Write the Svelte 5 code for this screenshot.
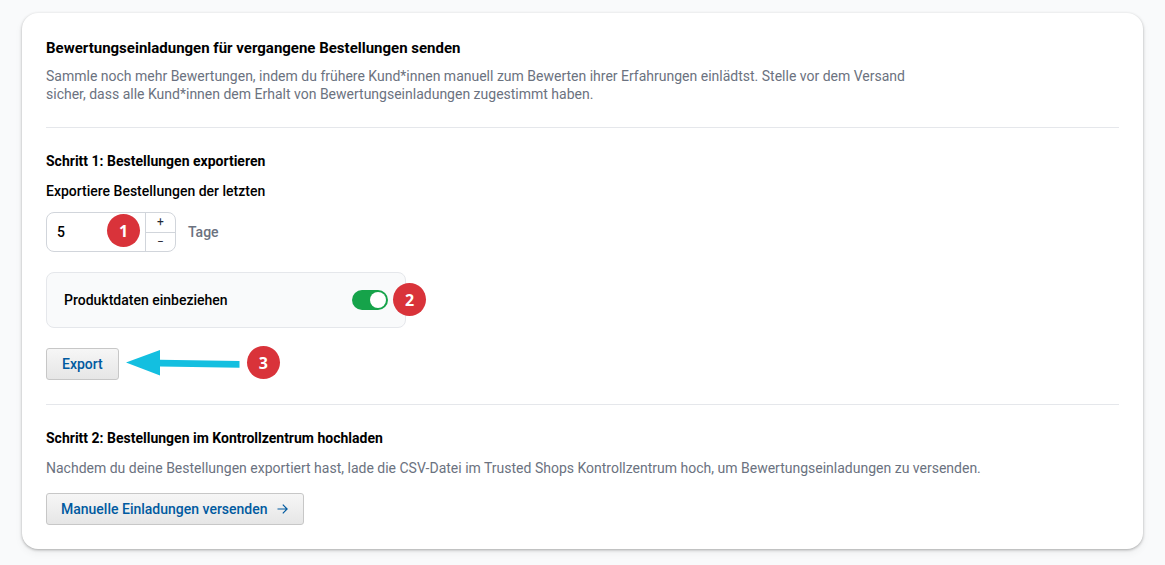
<script>
  let days = 5;
  let includeProducts = true;

  function increase() {
    days += 1;
  }

  function decrease() {
    if (days > 1) days -= 1;
  }
</script>

<main class="page">
  <div class="card">
    <section>
      <h1>Bewertungseinladungen für vergangene Bestellungen senden</h1>
      <p class="intro">
        Sammle noch mehr Bewertungen, indem du frühere Kund*innen manuell zum Bewerten ihrer
        Erfahrungen einlädtst. Stelle vor dem Versand sicher, dass alle Kund*innen dem Erhalt von
        Bewertungseinladungen zugestimmt haben.
      </p>
    </section>

    <section class="step">
      <h2>Schritt 1: Bestellungen exportieren</h2>
      <label class="field-label" for="days">Exportiere Bestellungen der letzten</label>

      <div class="days-row">
        <div class="stepper">
          <input id="days" type="text" inputmode="numeric" bind:value={days} />
          <div class="stepper-buttons">
            <button type="button" aria-label="Mehr Tage" on:click={increase}>+</button>
            <button type="button" aria-label="Weniger Tage" on:click={decrease}>−</button>
          </div>
          <span class="marker marker-days">1</span>
        </div>
        <span class="unit">Tage</span>
      </div>

      <div class="option">
        <label for="products">Produktdaten einbeziehen</label>
        <input id="products" class="switch" type="checkbox" bind:checked={includeProducts} />
        <span class="marker marker-option">2</span>
      </div>

      <div class="export">
        <button type="button" class="btn btn-export">Export</button>
        <div class="callout">
          <svg width="114" height="26" viewBox="0 0 114 26" aria-hidden="true">
            <path d="M0 12.5 34 0V9.7L113.5 11v6.7L34 16.5V25.500Z" fill="#13bfe0" />
          </svg>
          <span class="marker">3</span>
        </div>
      </div>
    </section>

    <section class="step">
      <h2>Schritt 2: Bestellungen im Kontrollzentrum hochladen</h2>
      <p class="hint">
        Nachdem du deine Bestellungen exportiert hast, lade die CSV-Datei im Trusted Shops
        Kontrollzentrum hoch, um Bewertungseinladungen zu versenden.
      </p>
      <button type="button" class="btn">
        Manuelle Einladungen versenden
        <svg width="12" height="12" viewBox="0 0 12 12" aria-hidden="true">
          <path d="M.5 6h9.5M5.8 1.700 10.100 6 5.800 10.300" fill="none" stroke="currentColor" stroke-width="1.200" />
        </svg>
      </button>
    </section>
  </div>
</main>

<style>
  :global(body) {
    background: #f9fafb;
  }

  .page {
    padding: 13px 22px 16px;
    font-family: Roboto, 'Liberation Sans', sans-serif;
    font-size: 14px;
    line-height: 18px;
    color: #000;
  }

  .card {
    padding: 24px;
    background: #fff;
    border-radius: 16px;
    box-shadow:
      0 1px 3px rgba(0, 0, 0, 0.3),
      0 4px 8px rgba(0, 0, 0, 0.05);
  }

  .step {
    margin-top: 24px;
    padding-top: 24px;
    border-top: 1px solid #e5e7eb;
  }

  h1,
  h2,
  p {
    margin: 0;
  }

  h1 {
    font-size: 15px;
    line-height: 22px;
    font-weight: 700;
  }

  h2 {
    font-size: 14px;
    line-height: 18px;
    font-weight: 700;
  }

  p {
    color: #6b7280;
  }

  .intro {
    max-width: 896px;
    margin-top: 8px;
  }

  .hint {
    margin: 12px 0 16px;
  }

  input,
  button {
    font: inherit;
    color: inherit;
    margin: 0;
  }

  .field-label {
    display: block;
    margin: 12px 0;
    font-weight: 500;
  }

  .days-row {
    display: flex;
    align-items: center;
    gap: 12px;
  }

  .stepper {
    position: relative;
    display: flex;
    box-sizing: border-box;
    width: 130px;
    height: 40px;
    border: 1px solid #d1d5db;
    border-radius: 8px;
  }

  .stepper input {
    flex: 1;
    min-width: 0;
    padding: 0 10px;
    border: none;
    border-radius: 8px;
    background: none;
    font-weight: 500;
  }

  .stepper-buttons {
    display: flex;
    flex-direction: column;
    width: 29px;
    border-left: 1px solid #d1d5db;
  }

  .stepper-buttons button {
    flex: 1;
    padding: 0;
    border: none;
    background: none;
    color: #1f2937;
    font-size: 12px;
    line-height: 18px;
    cursor: pointer;
  }

  .stepper-buttons button + button {
    border-top: 1px solid #d1d5db;
  }

  .unit {
    color: #6b7280;
    font-weight: 500;
  }

  .option {
    position: relative;
    display: flex;
    align-items: center;
    justify-content: space-between;
    box-sizing: border-box;
    max-width: 360px;
    margin: 20px 0;
    padding: 18px 17px;
    background: #f9fafb;
    border: 1px solid #e5e7eb;
    border-radius: 8px;
    font-weight: 500;
  }

  .switch {
    appearance: none;
    display: flex;
    box-sizing: border-box;
    width: 36px;
    height: 20px;
    margin: -1px 0;
    padding: 2px;
    border-radius: 10px;
    background: #d1d5db;
    cursor: pointer;
  }

  .switch::before {
    content: '';
    width: 16px;
    height: 16px;
    border-radius: 50%;
    background: #fff;
  }

  .switch:checked {
    justify-content: flex-end;
    background: #16a34a;
  }

  .marker {
    display: flex;
    align-items: center;
    justify-content: center;
    width: 33px;
    height: 33px;
    border-radius: 50%;
    background: #d9333a;
    color: #fff;
    font-family: 'Open Sans', sans-serif;
    font-size: 16px;
    font-weight: 700;
  }

  .marker-days {
    position: absolute;
    top: 1px;
    right: 35px;
  }

  .marker-option {
    position: absolute;
    top: 10px;
    right: -21px;
  }

  .export {
    position: relative;
    width: fit-content;
  }

  /* arrow and number sit beside the button without affecting the row height */
  .callout {
    position: absolute;
    top: -2px;
    left: 100%;
    display: flex;
    align-items: center;
    gap: 7px;
    padding-left: 7px;
  }

  .btn {
    display: flex;
    align-items: center;
    gap: 9px;
    box-sizing: border-box;
    height: 32px;
    padding: 0 14px;
    border: 1px solid #c7c7c7;
    border-radius: 3px;
    background: linear-gradient(#f6f6f6, #e6e6e6);
    color: #005aa0;
    font-weight: 500;
    cursor: pointer;
  }

  .btn:hover {
    background: #e6e6e6;
  }

  .btn-export {
    padding: 0 15px;
  }
</style>
